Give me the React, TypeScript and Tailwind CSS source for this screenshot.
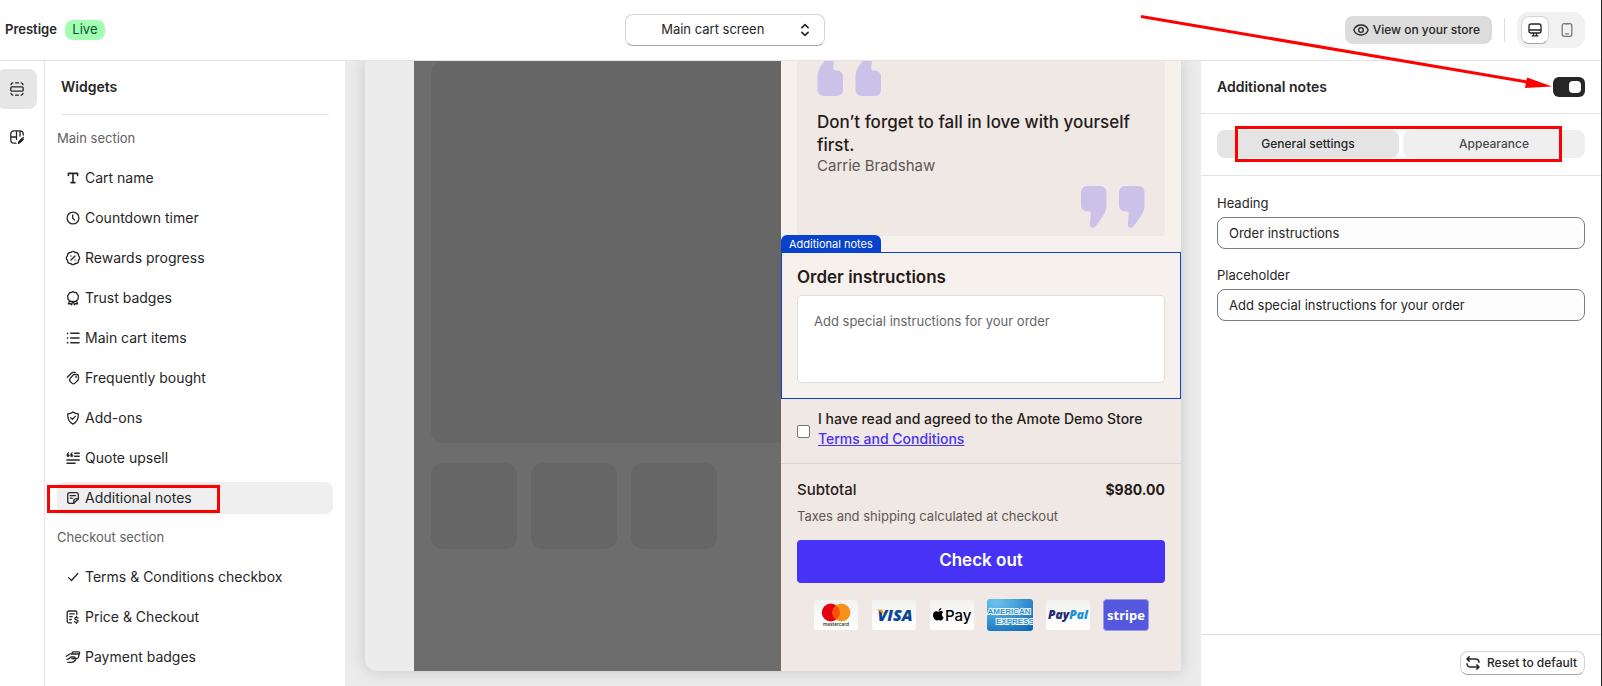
import React from 'react';
import { BadgePercent } from 'lucide-react';

interface IconProps {
  children: React.ReactNode;
  className?: string;
}

function Icon({ children, className = 'size-5' }: IconProps) {
  return (
    <svg
      viewBox="0 0 20 20"
      fill="none"
      stroke="currentColor"
      strokeWidth="1.3"
      strokeLinecap="round"
      strokeLinejoin="round"
      className={`shrink-0 ${className}`}
      aria-hidden="true"
    >
      {children}
    </svg>
  );
}

const mainItems = [
  {
    label: 'Cart name',
    icon: (
      <Icon>
        <path d="M5.4 7.4v-2h9.2v2M10 5.4v9.2M8 14.6h4" strokeWidth="1.6" />
      </Icon>
    ),
  },
  {
    label: 'Countdown timer',
    icon: (
      <Icon>
        <circle cx="10" cy="10" r="5.9" />
        <path d="M9.7 7v3.2l1.9 1.9" />
      </Icon>
    ),
  },
  {
    label: 'Rewards progress',
    icon: (
      <span className="flex size-5 shrink-0 items-center justify-center">
        <BadgePercent className="size-4" strokeWidth={2} />
      </span>
    ),
  },
  {
    label: 'Trust badges',
    icon: (
      <Icon>
        <path d="M10 3.6l1.6.9 1.9.2.8 1.7 1.2 1.4-.4 1.9-.1 1.8-1.5 1-1.2 1.1-1.3-.3-1 .3-1-.3-1.300.3-1.200-1.100-1.500-1-.1-1.800-.4-1.900 1.200-1.400.8-1.700 1.900-.2z" />
        <path d="M6.600 12.800l-1.300 3.100 2.100-.3 1.200 1.100 1-3M13.400 12.800l1.300 3.100-2.100-.3-1.200 1.100-1-3" />
      </Icon>
    ),
  },
  {
    label: 'Main cart items',
    icon: (
      <Icon>
        <path d="M7.800 5.300h8.200M7.800 10h8.200M7.800 14.700h8.200" strokeWidth="1.5" />
        <path d="M4.600 5.300h.01M4.600 10h.01M4.600 14.700h.01" strokeWidth="1.700" />
      </Icon>
    ),
  },
  {
    label: 'Frequently bought',
    icon: (
      <Icon>
        <path d="M11.200 6.400l2.700.1a1.600 1.600 0 0 1 1.500 1.500l.1 2.700a2 2 0 0 1-.6 1.500l-2.900 2.900a2.200 2.200 0 0 1-3.100 0l-1.600-1.600a2.200 2.200 0 0 1 0-3.100l2.400-2.900a2 2 0 0 1 1.500-1.100z" />
        <path d="M4.300 9.200l4-4a2.800 2.800 0 0 1 2-.9h2" />
        <path d="M13 8.900h.01" strokeWidth="1.800" />
      </Icon>
    ),
  },
  {
    label: 'Add-ons',
    icon: (
      <Icon>
        <path d="M10 3.900c1.400 1.300 3.300 1.900 5.300 1.900.3 4.600-1.300 8.300-5.300 10.400-4-2.100-5.600-5.800-5.300-10.400 2 0 3.900-.6 5.300-1.900z" />
        <path d="M7.800 9.800l1.600 1.600 2.900-3" />
      </Icon>
    ),
  },
  {
    label: 'Quote upsell',
    icon: (
      <Icon>
        <path d="M11.600 5.200h4.600M11.600 8.300h4.600M4 11.900h12.200M4 15.200h8" strokeWidth="1.5" />
        <path
          d="M5.700 4.300C4.500 5 3.800 6.100 3.800 7.500a1.300 1.300 0 1 0 1.400-1.300zM9.300 4.300C8.100 5 7.400 6.100 7.400 7.500a1.300 1.300 0 1 0 1.400-1.300z"
          fill="currentColor"
          strokeWidth=".5"
        />
      </Icon>
    ),
  },
  {
    label: 'Additional notes',
    icon: (
      <Icon>
        <path d="M10.800 15.300H6.700a2 2 0 0 1-2-2V6.700a2 2 0 0 1 2-2h6.600a2 2 0 0 1 2 2v4.200z" />
        <path d="M15.300 10.900h-2.500a2 2 0 0 0-2 2v2.400M7.300 7.700h5.200M7.300 10.200h2" />
      </Icon>
    ),
  },
];

const checkoutItems = [
  {
    label: 'Terms & Conditions checkbox',
    icon: (
      <Icon>
        <path d="M5.600 10.600l2.900 2.900 6.300-7" />
      </Icon>
    ),
  },
  {
    label: 'Price & Checkout',
    icon: (
      <Icon>
        <path d="M8.500 15.800H5.700a1.500 1.500 0 0 1-1.500-1.500V5.500A1.500 1.500 0 0 1 5.700 4h6.600a1.500 1.500 0 0 1 1.500 1.500v2M6.800 6.900h4.400M6.800 9.700h2.400M6.800 12.500h1.500" />
        <path d="M15 11c-.4-.5-1-.7-1.700-.7-.9 0-1.500.5-1.500 1.200 0 1.700 3.400.9 3.400 2.600 0 .8-.7 1.300-1.800 1.300-.7 0-1.400-.2-1.800-.8M13.400 9.400v1M13.400 15.400v1" />
      </Icon>
    ),
  },
  {
    label: 'Payment badges',
    icon: (
      <Icon>
        <path d="M8.600 7.300l.5-1.400a1.500 1.500 0 0 1 1.400-1h5a1.100 1.100 0 0 1 1.100 1.500l-1.300 4a1.500 1.500 0 0 1-1.400 1h-1.700M9.200 7h6.900" />
        <path d="M3.300 9.300l4-2.500M3.800 12.300c2.600 0 3-2.300 4.600-2.300h2.800c1.100 0 1 1.500 0 1.600l-2.400.2M4.900 15.400h3.500c2.500 0 3.800-1.500 4.500-3.300" />
      </Icon>
    ),
  },
];

interface WidgetItemProps {
  label: string;
  icon: React.ReactNode;
  active?: boolean;
}

function WidgetItem({ label, icon, active }: WidgetItemProps) {
  return (
    <li className="relative">
      <button
        type="button"
        className={`flex h-8 w-full items-center gap-0.5 rounded-lg pl-1.5 text-left text-sm ${active ? 'bg-[#efefef]' : ''}`}
      >
        {icon}
        {label}
      </button>
      {active && (
        <span className="pointer-events-none absolute top-[3px] -left-2.5 h-7 w-[173px] border-3 border-[#ff0000]" />
      )}
    </li>
  );
}

function TopBar() {
  return (
    <header className="flex h-[61px] shrink-0 items-center justify-between border-b border-[#e3e3e3] bg-white pr-4 pl-[5px]">
      <div className="flex items-center gap-2">
        <h1 className="text-[13px] font-semibold">Prestige</h1>
        <span className="flex h-5 w-10 items-center justify-center rounded-lg bg-[#a1feb2] text-[13px] text-[#0c5132]">Live</span>
      </div>
      <div className="relative">
        <select
          aria-label="Screen"
          className="h-8 w-[200px] appearance-none rounded-lg border border-[#d4d4d4] border-b-[#a6a6a6] bg-white pr-6 text-center text-[13px]"
        >
          <option>Main cart screen</option>
        </select>
        <Icon className="pointer-events-none absolute top-1.5 right-2.5 size-5">
          <path d="M6.900 7.600L10 4.700l3.100 2.900M6.900 12.400L10 15.300l3.100-2.900" strokeWidth="1.700" />
        </Icon>
      </div>
      <div className="flex items-center">
        <button type="button" className="flex h-7 items-center gap-0.5 rounded-lg bg-[#dcdcdc] pr-3 pl-1.5 text-xs font-medium">
          <Icon>
            <path d="M2.800 10c1.200-3 3.900-5 7.200-5s6 2 7.200 5c-1.200 3-3.900 5-7.200 5s-6-2-7.200-5z" />
            <circle cx="10" cy="10" r="2.300" />
          </Icon>
          View on your store
        </button>
        <span className="mx-3 h-6 w-px bg-[#dcdcdc]" />
        <div className="flex gap-1 rounded-xl bg-[#f1f1f1] p-1">
          <button
            type="button"
            aria-label="Desktop"
            className="flex size-7 items-center justify-center rounded-lg border border-[#d4d4d4] border-b-[#a6a6a6] bg-white"
          >
            <Icon>
              <rect x="4" y="4" width="12" height="9" rx="2" />
              <path d="M4.200 10h11.600M8.700 13.300l-.4 2.300M11.300 13.300l.4 2.300M7.200 15.900h5.600" />
            </Icon>
          </button>
          <button type="button" aria-label="Mobile" className="flex size-7 items-center justify-center text-[#7a7a7a]">
            <Icon>
              <rect x="5.200" y="3.700" width="9.600" height="12.600" rx="2" />
              <path d="M8.500 13.800h3M8.500 3.900h3" />
            </Icon>
          </button>
        </div>
      </div>
    </header>
  );
}

function Rail() {
  return (
    <nav className="-ml-[3px] flex w-12 shrink-0 flex-col gap-2 border-r border-[#e3e3e3] pt-2">
      <button type="button" aria-label="Widgets" className="flex size-10 items-center justify-center rounded-lg bg-[#e6e6e6]">
        <Icon>
          <rect x="3.800" y="7.900" width="12.400" height="4.200" rx="1.200" />
          <path d="M4 5.700c.2-.9.9-1.600 1.800-1.800M8.600 3.800h2.800M14.200 3.900c.9.2 1.600.9 1.800 1.800M4 14.300c.2.9.9 1.600 1.800 1.800M8.600 16.200h2.800M14.200 16.100c.9-.2 1.600-.9 1.800-1.800" />
        </Icon>
      </button>
      <button type="button" aria-label="Design" className="flex size-10 items-center justify-center rounded-lg">
        <Icon>
          <path d="M9 16.200H7a3.200 3.200 0 0 1-3.200-3.200V7A3.200 3.200 0 0 1 7 3.800h6A3.200 3.200 0 0 1 16.200 7v1M3.800 10h5.700M9.500 3.900v8.600M13 4v5M16.200 10.500v.5" />
          <path d="M11.300 16.200l.5-1.900 3.400-3.200 1.300 1.300-3.400 3.400z" fill="currentColor" strokeWidth="1" />
        </Icon>
      </button>
    </nav>
  );
}

function WidgetsPanel() {
  return (
    <aside className="w-[300px] shrink-0 overflow-hidden px-3">
      <h2 className="mx-1 flex h-[54px] items-center border-b border-[#e3e3e3] pb-0.5 text-sm font-semibold">Widgets</h2>
      <h3 className="mt-2 flex h-8 items-center text-[13px] text-[#616161]">Main section</h3>
      <ul className="mt-[7px] flex flex-col gap-2">
        {mainItems.map(item => (
          <WidgetItem key={item.label} label={item.label} icon={item.icon} active={item.label === 'Additional notes'} />
        ))}
      </ul>
      <h3 className="mt-2 flex h-8 items-center text-[13px] text-[#616161]">Checkout section</h3>
      <ul className="mt-[7px] flex flex-col gap-2">
        {checkoutItems.map(item => (
          <WidgetItem key={item.label} label={item.label} icon={item.icon} />
        ))}
      </ul>
    </aside>
  );
}

const quotePath =
  'M6 0H19.5A6 6 0 0 1 25.5 6V19C25.5 27 20 33 14.3 40.5Q12.5 42.5 10.5 41.500Q8.700 41 8.900 38L9.800 27.200Q9.800 25.500 8 25.500H6A6 6 0 0 1 0 19.500V6A6 6 0 0 1 6 0Z';

function QuoteMarks({ className }: { className: string }) {
  return (
    <svg viewBox="0 0 64 42" fill="#ccc1e9" className={`h-[42px] w-16 shrink-0 ${className}`} aria-hidden="true">
      <path d={quotePath} />
      <path transform="translate(38 0)" d={quotePath} />
    </svg>
  );
}

function PaymentBadges() {
  return (
    <div className="mt-4 flex justify-center gap-3">
      <svg viewBox="0 0 46 32" className="h-8 w-[46px]" role="img" aria-label="Mastercard">
        <defs>
          <linearGradient id="plain" x1="0" y1="0" x2="0" y2="1">
            <stop offset="0" stopColor="#f2f2f2" />
            <stop offset="1" stopColor="#ffffff" />
          </linearGradient>
        </defs>
        <rect x="1" y="1" width="44" height="30" rx="3" fill="url(#plain)" />
        <circle cx="17.800" cy="13.500" r="9" fill="#e3000f" />
        <circle cx="28.400" cy="13.500" r="9" fill="#f7931a" />
        <path d="M23.100 6.200a9 9 0 0 1 0 14.600a9 9 0 0 1 0-14.600z" fill="#ff4f0a" />
        <text x="23" y="27" textAnchor="middle" fontSize="4.800" fontWeight="500" fill="#231f20">mastercard</text>
      </svg>
      <svg viewBox="0 0 46 32" className="h-8 w-[46px]" role="img" aria-label="Visa">
        <rect x="1" y="1" width="44" height="30" rx="3" fill="url(#plain)" />
        <text x="24" y="22" textAnchor="middle" fontFamily="Open Sans" fontSize="16" fontWeight="800" fontStyle="italic" fill="#0a4595">VISA</text>
        <path d="M5 10.500h5c1 0 1.500.5 1.800 1.400l1.500 5.300C11.500 14 9 11.600 5 10.500z" fill="#f7a21b" />
      </svg>
      <svg viewBox="0 0 46 32" className="h-8 w-[46px]" role="img" aria-label="Apple Pay">
        <rect x="1" y="1" width="44" height="30" rx="3" fill="url(#plain)" />
        <path d="M12.300 9c.1 1.500-1.100 2.800-2.600 2.900-.2-1.500 1.200-2.800 2.600-2.900zM14.100 13.200c-.8.5-1.300 1.300-1.300 2.400 0 1.200.7 2.200 1.800 2.600-.5 1.500-1.500 3.300-2.700 3.300-.7 0-1.200-.4-2-.4s-1.400.4-2 .4C6.200 21.500 4 18.600 4 16c0-2.500 1.600-3.800 3.200-3.800 1 0 1.700.6 2.300.6s1.500-.7 2.700-.7c.7 0 1.400.3 1.900 1.100z" fill="#000" />
        <text x="16" y="21.500" fontSize="15" fontWeight="500" fill="#000">Pay</text>
      </svg>
      <svg viewBox="0 0 46 32" className="h-8 w-[46px]" role="img" aria-label="American Express">
        <defs>
          <radialGradient id="amex" cx="0.200" cy="0.100" r="1.100">
            <stop offset="0" stopColor="#6cc4ee" />
            <stop offset="1" stopColor="#0f6ab8" />
          </radialGradient>
        </defs>
        <rect width="46" height="32" rx="3" fill="url(#amex)" />
        <g fontFamily="Liberation Sans" fontSize="8" fontWeight="700" fill="#2a8fd0" stroke="#fff" strokeWidth="1.800" paintOrder="stroke">
          <text x="22" y="15" textAnchor="middle">AMERICAN</text>
          <text x="9" y="24.500">EXPRESS</text>
        </g>
      </svg>
      <svg viewBox="0 0 46 32" className="h-8 w-[46px]" role="img" aria-label="PayPal">
        <rect x="1" y="1" width="44" height="30" rx="3" fill="url(#plain)" />
        <text x="23" y="20" textAnchor="middle" fontFamily="Open Sans" fontSize="12" fontWeight="800" fontStyle="italic" fill="#1f2d6e">
          Pay<tspan fill="#1e91d6">Pal</tspan>
        </text>
      </svg>
      <svg viewBox="0 0 46 32" className="h-8 w-[46px]" role="img" aria-label="Stripe">
        <rect x="0.500" y="0.500" width="45" height="31" rx="3" fill="#5558de" stroke="#9a9ae6" />
        <text x="23" y="20.500" textAnchor="middle" fontFamily="Noto Sans" fontSize="13" fontWeight="700" fill="#fff">stripe</text>
      </svg>
    </div>
  );
}

function CartPreview() {
  return (
    <div className="flex w-[400px] shrink-0 flex-col justify-end bg-[#f6f1ed] text-[#261b19]">
      <div className="mx-4 mb-4 rounded bg-[#f0e8e5] px-5 pt-8 pb-2">
        <QuoteMarks className="rotate-180" />
        <p className="mt-[15px] text-[17px] leading-[23px] font-medium">Don’t forget to fall in love with yourself first.</p>
        <p className="text-[15px] leading-[18px] text-[#5f5654]">Carrie Bradshaw</p>
        <QuoteMarks className="mt-[11px] ml-auto" />
      </div>

      <section className="relative border border-[#0942cc] px-[15px] pt-3 pb-[15px]">
        <span className="absolute bottom-full -left-px flex h-[18px] items-center rounded-t-md bg-[#0942cc] px-2 text-[11px] text-white">
          Additional notes
        </span>
        <label htmlFor="cart-note" className="block text-[17px] leading-6 font-semibold">Order instructions</label>
        <textarea
          id="cart-note"
          placeholder="Add special instructions for your order"
          className="mt-1.5 block h-22 w-full resize-none rounded border border-[#dedede] bg-white p-4 text-[13px] placeholder:text-[#666]"
        />
      </section>

      <div className="bg-[#f0e8e5]">
        <div className="flex h-[65px] items-center gap-2 border-b border-[#d9d3d1] px-4">
          <input
            id="terms"
            type="checkbox"
            className="size-[13px] shrink-0 appearance-none rounded-xs border border-[#767676] bg-white"
          />
          <label htmlFor="terms" className="pb-1 text-sm leading-5 font-medium">
            I have read and agreed to the Amote Demo Store
            <a href="#terms" className="block text-[#4733f6] underline">Terms and Conditions</a>
          </label>
        </div>
        <div className="px-4 pt-4 pb-10">
          <div className="flex justify-between leading-5">
            <span className="text-[15px] font-medium">Subtotal</span>
            <span className="text-sm leading-5 font-bold">$980.00</span>
          </div>
          <p className="mt-1.5 text-[13px] leading-5 text-[#5f5654]">Taxes and shipping calculated at checkout</p>
          <button type="button" className="mt-3.5 h-[43px] w-full rounded bg-[#4733f6] pb-0.5 text-[17px] font-semibold text-white">
            Check out
          </button>
          <PaymentBadges />
        </div>
      </div>
    </div>
  );
}

function PreviewCanvas() {
  return (
    <main className="min-w-0 flex-1 overflow-hidden bg-[#ebebeb] px-5 pb-[15px]">
      <div className="flex h-full rounded-bl-xl bg-[#ececec] pl-[49px] shadow-[0_0_16px_rgba(0,0,0,0.16)]">
        <div className="flex min-w-0 flex-1 flex-col justify-end gap-5 overflow-hidden bg-[#6d6d6d] pb-[122px] pl-[17px]">
          <div className="h-[381px] shrink-0 rounded-l-xl bg-[#666]" />
          <div className="flex gap-3.5">
            <div className="size-[86px] rounded-xl bg-[#666]" />
            <div className="size-[86px] rounded-xl bg-[#666]" />
            <div className="size-[86px] rounded-xl bg-[#666]" />
          </div>
        </div>
        <CartPreview />
      </div>
    </main>
  );
}

interface FieldProps {
  id: string;
  label: string;
  value: string;
}

function Field({ id, label, value }: FieldProps) {
  return (
    <div>
      <label htmlFor={id} className="block text-[13px] leading-5">{label}</label>
      <input
        id={id}
        type="text"
        defaultValue={value}
        className="mt-1 block h-8 w-full rounded-lg border border-[#7c7c80] bg-[#fdfdfd] px-[11px] text-[13px]"
      />
    </div>
  );
}

function SettingsPanel() {
  return (
    <aside className="flex w-[400px] shrink-0 flex-col">
      <div className="flex h-[53px] items-center justify-between border-b border-[#e3e3e3] px-4">
        <h2 className="text-sm font-semibold">Additional notes</h2>
        <button
          type="button"
          role="switch"
          aria-checked="true"
          aria-label="Enable additional notes"
          className="flex h-5 w-8 items-center justify-end rounded-md bg-[#262626] px-1"
        >
          <span className="size-3 rounded bg-white" />
        </button>
      </div>
      <div className="border-b border-[#e3e3e3] px-4 pt-4 pb-[17px]">
        <div className="relative grid grid-cols-2 gap-1">
          <button type="button" className="h-7 rounded-lg bg-[#e4e4e4] text-xs font-medium">General settings</button>
          <button type="button" className="h-7 rounded-lg bg-[#efefef] text-xs font-medium text-[#4a4a4a]">Appearance</button>
          <span className="pointer-events-none absolute -inset-y-1 right-[23px] left-[18px] border-3 border-[#ff0000]" />
        </div>
      </div>
      <div className="flex flex-1 flex-col gap-4 px-4 pt-[17px]">
        <Field id="heading" label="Heading" value="Order instructions" />
        <Field id="placeholder" label="Placeholder" value="Add special instructions for your order" />
      </div>
      <div className="flex justify-end border-t border-[#dcdcdc] px-4 pt-4 pb-[11px]">
        <button
          type="button"
          className="flex h-6 items-center gap-1 rounded-lg border border-[#d4d4d4] border-b-[#a6a6a6] bg-white pr-[7px] pl-0.5 text-xs font-medium"
        >
          <Icon>
            <path d="M6.200 3.900L4 6l2.200 2.100M4.200 6h8.300a3.500 3.500 0 0 1 3.500 3.300M13.800 11.900L16 14l-2.200 2.100M15.800 14H7.500A3.500 3.500 0 0 1 4 10.700" strokeWidth="1.500" />
          </Icon>
          Reset to default
        </button>
      </div>
    </aside>
  );
}

export default function App() {
  return (
    <div className="relative flex h-screen w-full flex-col overflow-hidden border-r border-[#2b2b2b] bg-white font-[Inter,sans-serif] text-[#262626]">
      <TopBar />
      <div className="flex min-h-0 flex-1">
        <Rail />
        <WidgetsPanel />
        <PreviewCanvas />
        <SettingsPanel />
      </div>

      <svg viewBox="0 0 420 80" className="pointer-events-none absolute top-3 right-12 h-20 w-[420px]" aria-hidden="true">
        <path d="M8 4.500L397 70.500" stroke="#ff0000" strokeWidth="3" />
        <path d="M394 65.500L419 74.500L392 76Z" fill="#ff0000" />
      </svg>
    </div>
  );
}
